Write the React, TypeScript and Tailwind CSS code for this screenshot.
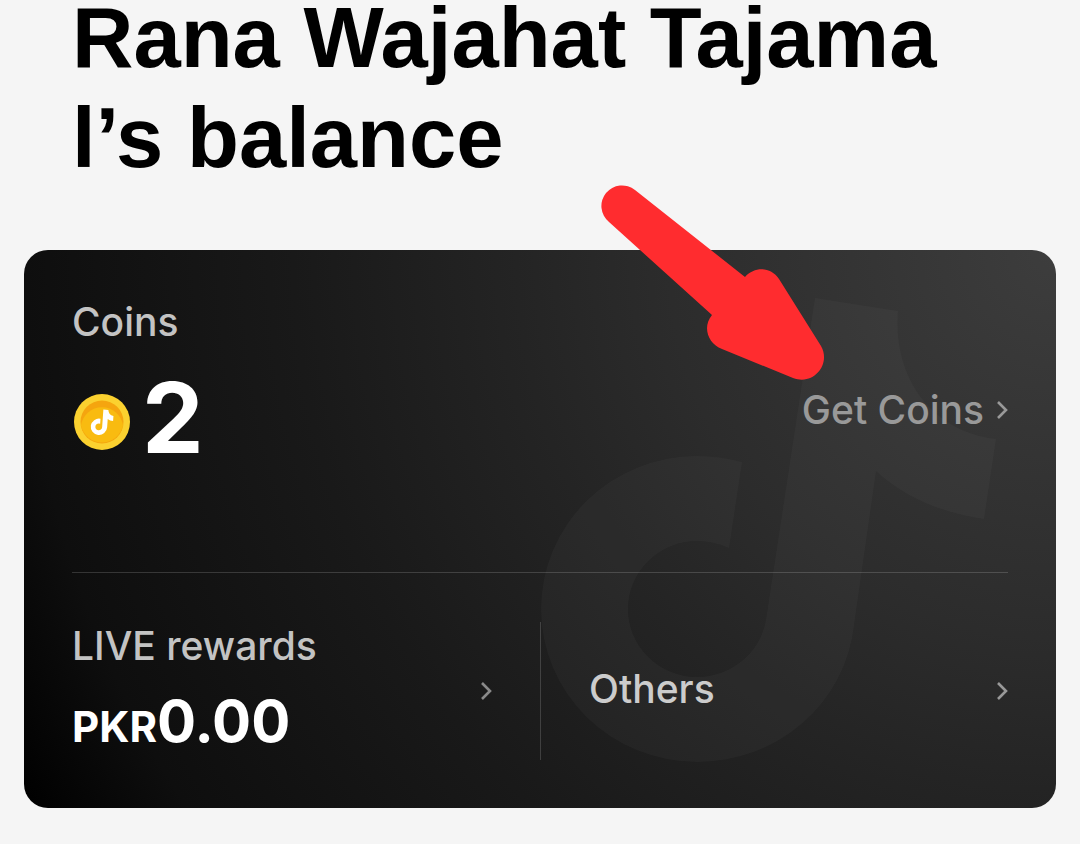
import React from 'react';

interface ChevronProps {
    className?: string;
}

function Chevron({ className = '' }: ChevronProps) {
    return (
        <svg
            className={`h-5 w-3 shrink-0 ${className}`}
            viewBox="0 0 12 20"
            fill="none"
            stroke="currentColor"
            strokeWidth="2.6"
            aria-hidden="true"
        >
            <path d="M2 2 10 10 2 18" />
        </svg>
    );
}

function CoinIcon() {
    return (
        <svg className="h-14 w-14 shrink-0" viewBox="0 0 56 56" aria-hidden="true">
            <circle cx="28" cy="28" r="28" fill="#fbd12f" />
            <circle cx="28" cy="28" r="21.5" fill="#f5a50f" />
            <path d="M7 31.500a21.200 21.200 0 0 1 42 0a21.500 21.500 0 0 1-42 0Z" fill="#f9bb10" />
            <path
                d="M28.500 15.500h5c.3 3 2.200 5.200 5.500 5.700v5c-2.100 0-4-.6-5.500-1.700v8.500a8.200 8.200 0 1 1-7.200-8.100v5a3.400 3.400 0 1 0 2.200 3.100Z"
                fill="#fff"
                transform="rotate(4 28 28)"
            />
        </svg>
    );
}

function NoteWatermark() {
    return (
        <svg
            className="pointer-events-none absolute right-14 top-11 h-[470px] w-[460px]"
            viewBox="540 294 460 470"
            aria-hidden="true"
        >
            <path
                d="M815 298 898 311C893 373 927 430 996 439L984 519C943 513 905 498 876 471L854 625A157 153 0 0 1 697 762A156 153 0 0 1 541 609A156 153 0 0 1 697 456Q720 456 742 462L729 548Q714 541 697 541A69 68 0 0 0 628 609A69 68 0 0 0 697 677A70 68 0 0 0 766 620Z"
                fill="#fff"
                fillOpacity="0.026"
            />
        </svg>
    );
}

function PointerArrow() {
    return (
        <svg
            className="pointer-events-none absolute -top-16.5 right-57 h-50 w-57"
            viewBox="600 184 228 200"
            aria-hidden="true"
        >
            <path
                d="M635 190 745 277C755 266 771 267 779 279L821 346C831 363 815 386 793 378L722 349C708 344 702 327 712 315L609 222A20.500 20.500 0 0 1 635 190Z"
                fill="#ff2c2f"
            />
        </svg>
    );
}

export default function App() {
    return (
        <div className="flex min-h-screen flex-col bg-[#f5f5f5] pb-9 font-['Inter',sans-serif]">
            <h1 className="-mt-3 px-18 font-['Liberation_Sans',sans-serif] text-[85px] font-bold leading-[100px] text-black">
                Rana Wajahat Tajama
                <br />
                l’s balance
            </h1>

            <main className="relative mx-6 mt-15.5 rounded-3xl bg-[radial-gradient(circle_farthest-corner_at_top_right,#3d3d3d_0%,#2c2c2c_33%,#242424_46%,#191919_65%,#0e0e0e_88%,#000000_100%)] p-12">
                <NoteWatermark />

                {/* Coins */}
                <section className="relative border-b border-white/16 pb-[94px]">
                    <h2 className="text-[39px] font-medium leading-12 text-[#c3c3c3]">Coins</h2>
                    <div className="mt-5 flex items-center justify-between">
                        <div className="flex items-center gap-3 pl-0.5">
                            <CoinIcon />
                            <span className="pb-2 text-[98px] font-bold leading-26 text-white">
                                2
                            </span>
                        </div>
                        <button type="button" className="flex items-center gap-3 pb-6 text-[39px] font-medium leading-12 text-[#999999]">
                            Get Coins
                            <Chevron />
                        </button>
                    </div>
                </section>

                {/* Rewards and others */}
                <section className="relative mt-[49px] grid grid-cols-2">
                    <button type="button" className="flex items-center justify-between pr-12 text-left">
                        <span className="flex flex-col">
                            <span className="text-[39px] font-medium leading-12 text-[#c3c3c3]">LIVE rewards</span>
                            <span className="mt-3 flex items-baseline text-[58px] font-bold leading-[78px] text-white">
                                <span className="text-[42px] leading-12">PKR</span>
                                <span>0.00</span>
                            </span>
                        </span>
                        <Chevron className="text-[#8a8a8a]" />
                    </button>
                    <button type="button" className="flex items-center justify-between border-l border-white/16 pl-12 text-left">
                        <span className="pb-1 text-[39px] font-medium leading-12 text-[#cccccc]">Others</span>
                        <Chevron className="text-[#999999]" />
                    </button>
                </section>

                <PointerArrow />
            </main>
        </div>
    );
}
